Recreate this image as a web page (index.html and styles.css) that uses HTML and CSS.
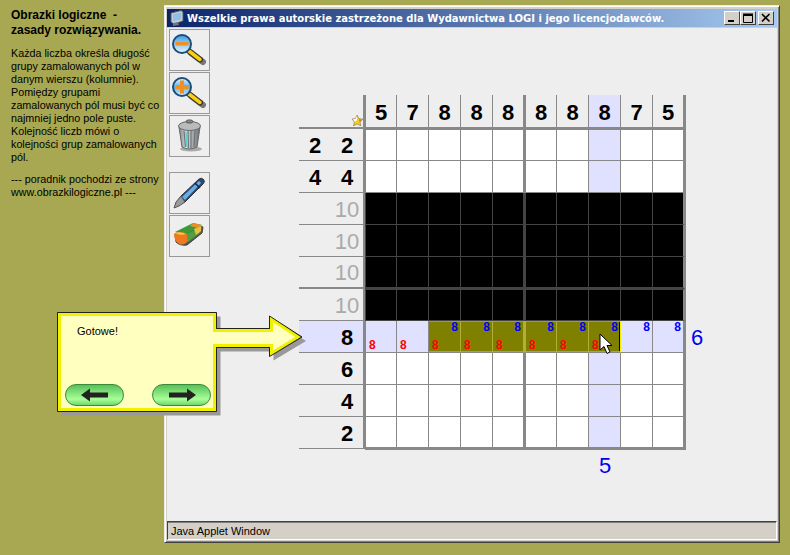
FILE: index.html
```html
<!DOCTYPE html>
<html lang="pl">
<head>
    <meta charset="UTF-8">
    <title>Obrazki logiczne</title>
    <link rel="stylesheet" href="styles.css">
</head>
<body>
    <aside class="guide">
        <h2>Obrazki logiczne &nbsp;-<br>zasady rozwiązywania.</h2>
        <p>Każda liczba określa długość grupy zamalowanych pól w danym wierszu (kolumnie). Pomiędzy grupami zamalowanych pól musi być co najmniej jedno pole puste. Kolejność liczb mówi o kolejności grup zamalowanych pól.</p>
        <p>--- poradnik pochodzi ze strony www.obrazkilogiczne.pl ---</p>
    </aside>

    <div class="window">
        <div class="titlebar">
            <svg class="app-icon" width="14" height="16" viewBox="0 0 14 16">
                <path d="M1 3 L11 0.5 L13 2 V11 L4 14 L1 12 Z" fill="#c8ccd4" stroke="#555"/>
                <path d="M3 4 L11 2.5 V9.5 L3 11.5 Z" fill="#8fc0e8"/>
                <path d="M3 13 L8 12 L9 15 L3 16 Z" fill="#777"/>
            </svg>
            <span class="title-text">Wszelkie prawa autorskie zastrzeżone dla Wydawnictwa LOGI i jego licencjodawców.</span>
            <div class="win-buttons">
                <button class="win-btn"><svg width="10" height="10" viewBox="0 0 10 10"><rect x="1" y="7" width="6" height="2"/></svg></button>
                <button class="win-btn"><svg width="10" height="10" viewBox="0 0 10 10"><path d="M0.5 1.5 H9.5 V9.5 H0.5 Z M0 1 H10 V2.5 H0 Z" fill="none" stroke="#000"/></svg></button>
                <button class="win-btn win-close"><svg width="10" height="10" viewBox="0 0 10 10"><path d="M1 1 L8.5 8.5 M8.5 1 L1 8.5" stroke="#000" stroke-width="1.6" fill="none"/></svg></button>
            </div>
        </div>

        <div class="content">
            <div class="tools">
                <div class="tool">
                    <svg width="39" height="40" viewBox="0 0 39 40">
                        <defs>
                            <linearGradient id="lens" x1="0" y1="0" x2="0" y2="1"><stop offset="0" stop-color="#3aa0e8"/><stop offset="1" stop-color="#e8f4ff"/></linearGradient>
                            <linearGradient id="lens2" x1="0" y1="0" x2="0" y2="1"><stop offset="0" stop-color="#e8f4ff"/><stop offset="0.5" stop-color="#58b4ee"/><stop offset="1" stop-color="#d8ecfa"/></linearGradient>
                        </defs>
                        <path d="M21 23 L33 32" stroke="#777" stroke-width="6" stroke-linecap="round"/>
                        <path d="M19 21 L30 29.5" stroke="#333" stroke-width="6" stroke-linecap="round"/>
                        <path d="M19 21 L30 29.5" stroke="#f8d010" stroke-width="3.5" stroke-linecap="round"/>
                        <circle cx="12" cy="14" r="9" fill="url(#lens)" stroke="#1c4c78" stroke-width="2"/>
                        <rect x="5.5" y="12" width="13" height="3.5" fill="#f09020"/>
                    </svg>
                </div>
                <div class="tool">
                    <svg width="39" height="40" viewBox="0 0 39 40">
                        <path d="M21 23 L33 32" stroke="#777" stroke-width="6" stroke-linecap="round"/>
                        <path d="M19 21 L30 29.5" stroke="#333" stroke-width="6" stroke-linecap="round"/>
                        <path d="M19 21 L30 29.5" stroke="#f8d010" stroke-width="3.5" stroke-linecap="round"/>
                        <circle cx="12" cy="14" r="9" fill="url(#lens2)" stroke="#1c4c78" stroke-width="2"/>
                        <path d="M10 7.5 H14 V12 H18.5 V16 H14 V20.5 H10 V16 H5.5 V12 H10 Z" fill="#f09020"/>
                    </svg>
                </div>
                <div class="tool">
                    <svg width="39" height="40" viewBox="0 0 39 40">
                        <defs>
                            <linearGradient id="can" x1="0" y1="0" x2="1" y2="0"><stop offset="0" stop-color="#808488"/><stop offset="0.35" stop-color="#d8dcdc"/><stop offset="1" stop-color="#6c7074"/></linearGradient>
                        </defs>
                        <ellipse cx="21" cy="33" rx="11" ry="2.5" fill="#aaa"/>
                        <path d="M9 11 L12 31 Q19 35 27 31 L30 11 Z" fill="url(#can)" stroke="#666"/>
                        <path d="M14 15 L15.5 31 M18 15 L18.5 32 M21 15 L21 32 M25 15 L24 31" stroke="#6f7478" stroke-width="1.2" fill="none"/>
                        <path d="M16 16 L17 31" stroke="#60d0d0" stroke-width="1.5"/>
                        <ellipse cx="19.5" cy="10" rx="11" ry="4.5" fill="#b8bcbc" stroke="#666"/>
                        <ellipse cx="19.5" cy="5.5" rx="3.5" ry="1.6" fill="#888" stroke="#555"/>
                    </svg>
                </div>
                <div class="tool tool-gap">
                    <svg width="39" height="40" viewBox="0 0 39 40">
                        <path d="M6 32 L11 23 L29 6 Q32 4 34 7 Q35 9 33 11 L15 29 Z" fill="#2c4a78" stroke="#333"/>
                        <path d="M12 24 L29 8 L31 10 L15 27 Z" fill="#68aee8"/>
                        <path d="M4 35 L6 29 L11 23 L15 29 L9 33 Z" fill="#9a9a9a" stroke="#555"/>
                        <path d="M25 10 L30 15" stroke="#17263f" stroke-width="1.5"/>
                    </svg>
                </div>
                <div class="tool">
                    <svg width="39" height="40" viewBox="0 0 39 40">
                        <path d="M5 18 L24 8 L33 11 L32 17 L17 29 Q10 30 6 26 Z" fill="#555" stroke="#444"/>
                        <path d="M5 16 L23 7 L32 9 L17 18 Z" fill="#3c9a3c"/>
                        <path d="M23 7 L32 9 L28 12 L20 10 Z" fill="#e89028"/>
                        <path d="M17 18 L32 10 L31 16 L18 26 Z" fill="#50a040"/>
                        <path d="M24 13 L31 10 L31 15 L26 19 Z" fill="#e8c040"/>
                        <path d="M4 18 Q10 14 17 18 L18 25 Q14 30 9 28 Q4 25 4 18 Z" fill="#f07820"/>
                        <path d="M5 17 Q10 15 16 18 Q10 20 5 17 Z" fill="#f8d040"/>
                    </svg>
                </div>
            </div>

            <div class="board">
                <div class="row head">
                    <div class="side">
                        <svg class="star" width="11" height="11" viewBox="0 0 11 11">
                            <path d="M5 0 L7 3.5 L11 4.2 L8 7 L9 11 L5 9 L1.5 11 L2.3 7 L0 4 L3.5 3.5 Z" fill="#f8c820" stroke="#666" stroke-width="0.5"/>
                            <path d="M5 1 L3.5 4 L1 4.3 L3 7 L5 5 Z" fill="#fff"/>
                            <path d="M7 4 L10.5 4.4 L8 7 L7 6 Z" fill="#f08010"/>
                        </svg>
                    </div>
                    <div class="cell">5</div><div class="cell">7</div><div class="cell">8</div><div class="cell">8</div><div class="cell">8</div>
                    <div class="cell">8</div><div class="cell">8</div><div class="cell hl">8</div><div class="cell">7</div><div class="cell">5</div>
                </div>
                <div class="row">
                    <div class="side"><span>2</span><span>2</span></div>
                    <div class="cell"></div><div class="cell"></div><div class="cell"></div><div class="cell"></div><div class="cell"></div>
                    <div class="cell"></div><div class="cell"></div><div class="cell hl"></div><div class="cell"></div><div class="cell"></div>
                </div>
                <div class="row">
                    <div class="side"><span>4</span><span>4</span></div>
                    <div class="cell"></div><div class="cell"></div><div class="cell"></div><div class="cell"></div><div class="cell"></div>
                    <div class="cell"></div><div class="cell"></div><div class="cell hl"></div><div class="cell"></div><div class="cell"></div>
                </div>
                <div class="row filled">
                    <div class="side done"><span>10</span></div>
                    <div class="cell"></div><div class="cell"></div><div class="cell"></div><div class="cell"></div><div class="cell"></div>
                    <div class="cell"></div><div class="cell"></div><div class="cell"></div><div class="cell"></div><div class="cell"></div>
                </div>
                <div class="row filled">
                    <div class="side done"><span>10</span></div>
                    <div class="cell"></div><div class="cell"></div><div class="cell"></div><div class="cell"></div><div class="cell"></div>
                    <div class="cell"></div><div class="cell"></div><div class="cell"></div><div class="cell"></div><div class="cell"></div>
                </div>
                <div class="row filled">
                    <div class="side done"><span>10</span></div>
                    <div class="cell"></div><div class="cell"></div><div class="cell"></div><div class="cell"></div><div class="cell"></div>
                    <div class="cell"></div><div class="cell"></div><div class="cell"></div><div class="cell"></div><div class="cell"></div>
                </div>
                <div class="row filled">
                    <div class="side done"><span>10</span></div>
                    <div class="cell"></div><div class="cell"></div><div class="cell"></div><div class="cell"></div><div class="cell"></div>
                    <div class="cell"></div><div class="cell"></div><div class="cell"></div><div class="cell"></div><div class="cell"></div>
                </div>
                <div class="row active">
                    <div class="side hl"><span>8</span></div>
                    <div class="cell"><i class="red">8</i></div>
                    <div class="cell"><i class="red">8</i></div>
                    <div class="cell sel"><i class="red">8</i><i class="blue">8</i></div>
                    <div class="cell sel"><i class="red">8</i><i class="blue">8</i></div>
                    <div class="cell sel"><i class="red">8</i><i class="blue">8</i></div>
                    <div class="cell sel"><i class="red">8</i><i class="blue">8</i></div>
                    <div class="cell sel"><i class="red">8</i><i class="blue">8</i></div>
                    <div class="cell sel sel-end"><i class="red">8</i><i class="blue">8</i></div>
                    <div class="cell only-blue"><i class="blue">8</i></div>
                    <div class="cell only-blue"><i class="blue">8</i></div>
                    <div class="count">6</div>
                </div>
                <div class="row">
                    <div class="side"><span>6</span></div>
                    <div class="cell"></div><div class="cell"></div><div class="cell"></div><div class="cell"></div><div class="cell"></div>
                    <div class="cell"></div><div class="cell"></div><div class="cell hl"></div><div class="cell"></div><div class="cell"></div>
                </div>
                <div class="row">
                    <div class="side"><span>4</span></div>
                    <div class="cell"></div><div class="cell"></div><div class="cell"></div><div class="cell"></div><div class="cell"></div>
                    <div class="cell"></div><div class="cell"></div><div class="cell hl"></div><div class="cell"></div><div class="cell"></div>
                </div>
                <div class="row">
                    <div class="side"><span>2</span></div>
                    <div class="cell"></div><div class="cell"></div><div class="cell"></div><div class="cell"></div><div class="cell"></div>
                    <div class="cell"></div><div class="cell"></div><div class="cell hl"></div><div class="cell"></div><div class="cell"></div>
                </div>
                <div class="foot">5</div>

                <svg class="cursor" width="14" height="22" viewBox="0 0 14 22">
                    <path d="M1 1 V17 L5 13.5 L8 20.5 L11 19 L8 12.5 L13 12.5 Z" fill="#fff" stroke="#000"/>
                </svg>
            </div>
        </div>

        <div class="statusbar">Java Applet Window</div>
    </div>

    <div class="callout">
        <svg class="callout-shape" width="252" height="108" viewBox="0 0 252 108">
            <path d="M0.5 0.5 H159.5 V16.5 H212.5 V4 L245 25 L212.5 44.5 V35.5 H159.5 V99.5 H0.5 Z" fill="#999" transform="translate(4 4)"/>
            <path d="M0.5 0.5 H159.5 V16.5 H212.5 V4 L245 25 L212.5 44.5 V35.5 H159.5 V99.5 H0.5 Z" fill="#222" stroke="#222"/>
            <path d="M2.5 2.5 H157.5 V18.5 H214.5 V7.5 L241 25 L214.5 41 V33.5 H157.5 V97.5 H2.5 Z" fill="#ffffc0" stroke="#f0f000" stroke-width="3"/>
        </svg>
        <div class="callout-text">Gotowe!</div>
        <div class="callout-nav">
            <button class="pill">
                <svg width="28" height="14" viewBox="0 0 28 14"><path d="M0 7 L9 0.5 V4.5 H27 V9.5 H9 V13.5 Z" fill="#222"/></svg>
            </button>
            <button class="pill">
                <svg width="28" height="14" viewBox="0 0 28 14"><path d="M28 7 L19 0.5 V4.5 H1 V9.5 H19 V13.5 Z" fill="#222"/></svg>
            </button>
        </div>
    </div>
</body>
</html>
```

FILE: styles.css
```css
html, body {
    height: 100%;
}

body {
    margin: 0;
    width: 790px;
    height: 555px;
    overflow: hidden;
    display: flex;
    align-items: flex-start;
    background-color: #a8a852;
    font-family: "Liberation Sans", Arial, sans-serif;
    font-size: 11px;
    color: #000;
}

.guide {
    box-sizing: border-box;
    width: 164px;
    padding: 8px 3px 0 11px;
    font-size: 10.75px;
    line-height: 13px;
}

.guide h2 {
    margin: 0 0 9px;
    font-size: 12px;
    line-height: 15px;
    font-weight: bold;
}

.guide p {
    margin: 0 0 9px;
}

/* window */
.window {
    box-sizing: border-box;
    width: 616px;
    height: 538px;
    margin-top: 5px;
    padding: 2px;
    display: flex;
    flex-direction: column;
    background-color: #d4d0c8;
    border: 1px solid;
    border-color: #eeece6 #404040 #404040 #eeece6;
    box-shadow: inset 1px 1px 0 #fff, inset -1px -1px 0 #808080;
}

.titlebar {
    height: 18px;
    flex: none;
    margin-top: 1px;
    padding: 0 3px 0 3px;
    display: flex;
    align-items: center;
    background: linear-gradient(to right, #0a246a, #a6caf0);
    color: #fff;
}

.app-icon {
    flex: none;
    margin-right: 3px;
}

.title-text {
    font-family: "DejaVu Sans", Verdana, sans-serif;
    font-size: 10px;
    font-weight: bold;
    white-space: nowrap;
}

.win-buttons {
    margin-left: auto;
    display: flex;
}

.win-btn {
    box-sizing: border-box;
    width: 16px;
    height: 14px;
    padding: 0;
    display: flex;
    align-items: center;
    justify-content: center;
    background-color: #d4d0c8;
    border: 1px solid;
    border-color: #fff #404040 #404040 #fff;
}

.win-close {
    margin-left: 2px;
}

.content {
    flex: 1;
    display: flex;
    align-items: flex-start;
    background-color: #eeeeee;
    margin-top: 1px;
}

/* tool column */
.tools {
    flex: none;
    width: 41px;
    margin-left: 2px;
    padding-top: 1px;
}

.tool {
    box-sizing: border-box;
    width: 41px;
    height: 42px;
    margin-bottom: 1px;
    border: 1px solid #999;
    display: flex;
    align-items: center;
    justify-content: center;
}

.tool-gap {
    margin-top: 15px;
}

/* puzzle */
.board {
    position: relative;
    margin: 67px 0 0 89px;
}

.row {
    display: flex;
    height: 32px;
}

.row.head {
    height: 34px;
}

.side {
    box-sizing: border-box;
    position: relative;
    flex: none;
    width: 66px;
    padding-top: 2px;
    display: flex;
    justify-content: flex-end;
    align-items: center;
    border-right: 2px solid #888;
    border-bottom: 1px solid #888;
    font-size: 22px;
    font-weight: bold;
}

.side span {
    width: 32px;
    text-align: center;
}

.side.done {
    color: #aaaaaa;
    font-weight: normal;
}

.cell {
    box-sizing: border-box;
    flex: none;
    width: 32px;
    height: 32px;
    display: flex;
    justify-content: space-between;
    padding: 0 2px;
    background-color: #fff;
    border-right: 1px solid #888;
    border-bottom: 1px solid #888;
}

.head .side,
.head .cell {
    height: 34px;
    border-bottom-width: 2px;
}

.head .cell {
    align-items: flex-end;
    justify-content: center;
    padding-bottom: 2px;
    background-color: transparent;
    font-size: 22px;
    line-height: 24px;
    font-weight: bold;
}

.row .cell:nth-child(2),
.row .cell:nth-child(7) {
    border-left: 1px solid #888;
}

.row .cell:nth-child(6) {
    border-right-width: 2px;
}

.row .cell:nth-child(11) {
    border-right-width: 2px;
    box-shadow: 1px 0 0 #888;
}

.row:nth-child(2) .cell {
    border-top: 1px solid #888;
}

.row:nth-child(6) .cell,
.row:nth-child(6) .side {
    border-bottom-width: 2px;
}

.row:nth-child(7) .cell {
    border-top: 1px solid #888;
}

.row:nth-child(11) .cell {
    border-bottom-width: 2px;
    box-shadow: 0 1px 0 #888;
}

.row:nth-child(11) .cell:nth-child(11) {
    box-shadow: 1px 0 0 #888, 0 1px 0 #888, 1px 1px 0 #888;
}

.row .cell.hl,
.row .side.hl {
    background-color: #e0e0ff;
}

.row.filled .cell {
    background-color: #000;
    border-color: #444;
}

.row.filled .cell:nth-child(11) {
    box-shadow: 1px 0 0 #888;
    border-right-color: #888;
}

.active .cell {
    background-color: #e0e0ff;
}

.row.active .cell.sel {
    background-color: #808000;
    border-left-color: #b0b038;
    border-right-color: #b0b038;
    box-shadow: inset 0 1px 0 #a0a028, inset 0 -1px 0 #a8a830;
}

.row.active .cell.sel-end {
    border-right: 1px solid #f0f000;
    box-shadow: inset 0 1px 0 #a0a028, inset 0 -1px 0 #a8a830, inset -1px 0 0 #000;
}

.only-blue {
    justify-content: flex-end;
}

.cell i {
    font-family: "Liberation Sans", Arial, sans-serif;
    font-style: normal;
    font-weight: bold;
    font-size: 12px;
    line-height: 12px;
}

.red {
    color: #ff0000;
    align-self: flex-end;
    margin: 0 0 1px 1px;
}

.blue {
    color: #0000ff;
    margin: 0;
}

.count {
    width: 24px;
    text-align: center;
    font-size: 22px;
    line-height: 34px;
    color: #0000f0;
}

.foot {
    width: 32px;
    margin: 2px 0 0 290px;
    text-align: center;
    font-size: 22px;
    line-height: 30px;
    color: #0000f0;
}

.star {
    position: absolute;
    right: 0;
    bottom: 1px;
}

.cursor {
    position: absolute;
    left: 300px;
    top: 238px;
}

.statusbar {
    box-sizing: border-box;
    flex: none;
    height: 19px;
    padding-left: 3px;
    line-height: 18px;
    font-size: 11px;
    background-color: #d4d0c8;
    border: 1px solid;
    border-color: #404040 #fff #fff #404040;
    box-shadow: inset 0 1px 0 #808080;
}

/* yellow hint box, sits over the window */
.callout {
    position: absolute;
    left: 57px;
    top: 312px;
    box-sizing: border-box;
    width: 160px;
    height: 100px;
    padding: 13px 6px 6px 8px;
    display: flex;
    flex-direction: column;
    justify-content: space-between;
}

.callout-shape {
    position: absolute;
    left: 0;
    top: 0;
}

.callout-text {
    position: relative;
    padding-left: 12px;
}

.callout-nav {
    position: relative;
    display: flex;
    justify-content: space-between;
}

.pill {
    box-sizing: border-box;
    width: 59px;
    height: 22px;
    padding: 0;
    display: flex;
    align-items: center;
    justify-content: center;
    border: 1px solid #3c8a3c;
    border-radius: 11px;
    background: linear-gradient(to bottom, #58c058, #a8ff98 70%, #70d870);
}
```
